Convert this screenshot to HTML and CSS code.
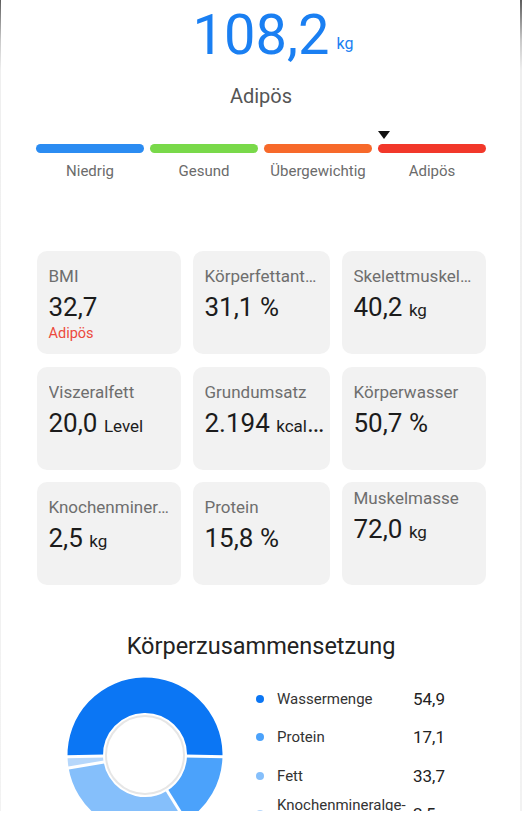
FILE: index.html
```html
<!DOCTYPE html>
<html lang="de">
<head>
    <meta charset="UTF-8">
    <meta name="viewport" content="width=device-width, initial-scale=1.0">
    <title>Gewicht</title>
    <link rel="stylesheet" href="styles.css">
</head>
<body>
    <div class="screen">
        <section class="weight">
            <div class="weight-value">
                <span class="weight-number">108,2</span>
                <span class="weight-unit">kg</span>
            </div>
            <div class="weight-status">Adipös</div>
            <div class="scale">
                <div class="scale-seg">
                    <div class="scale-mark"></div>
                    <div class="scale-bar bar-low"></div>
                    <div class="scale-label">Niedrig</div>
                </div>
                <div class="scale-seg">
                    <div class="scale-mark"></div>
                    <div class="scale-bar bar-ok"></div>
                    <div class="scale-label">Gesund</div>
                </div>
                <div class="scale-seg">
                    <div class="scale-mark"></div>
                    <div class="scale-bar bar-over"></div>
                    <div class="scale-label">Übergewichtig</div>
                </div>
                <div class="scale-seg">
                    <div class="scale-mark active"></div>
                    <div class="scale-bar bar-obese"></div>
                    <div class="scale-label">Adipös</div>
                </div>
            </div>
        </section>

        <section class="metrics">
            <div class="card">
                <div class="card-label">BMI</div>
                <div class="card-value">32,7</div>
                <div class="card-note">Adipös</div>
            </div>
            <div class="card">
                <div class="card-label">Körperfettanteil</div>
                <div class="card-value">31,1 %</div>
            </div>
            <div class="card">
                <div class="card-label">Skelettmuskelmasse</div>
                <div class="card-value">40,2 <span class="card-unit">kg</span></div>
            </div>
            <div class="card">
                <div class="card-label">Viszeralfett</div>
                <div class="card-value">20,0 <span class="card-unit">Level</span></div>
            </div>
            <div class="card">
                <div class="card-label">Grundumsatz</div>
                <div class="card-value">2.194 <span class="card-unit">kcal/Tag</span></div>
            </div>
            <div class="card">
                <div class="card-label">Körperwasser</div>
                <div class="card-value">50,7 %</div>
            </div>
            <div class="card">
                <div class="card-label">Knochenmineralgehalt</div>
                <div class="card-value">2,5 <span class="card-unit">kg</span></div>
            </div>
            <div class="card">
                <div class="card-label">Protein</div>
                <div class="card-value">15,8 %</div>
            </div>
            <div class="card card-high">
                <div class="card-label">Muskelmasse</div>
                <div class="card-value">72,0 <span class="card-unit">kg</span></div>
            </div>
        </section>

        <section class="composition">
            <h2>Körperzusammensetzung</h2>
            <div class="chart-row">
                <svg class="donut" width="160" height="160" viewBox="0 0 160 160">
                    <circle cx="80" cy="80" r="59.75" fill="none" stroke="#0b76f4" stroke-width="35.5"
                        stroke-dasharray="190.49 375.42" transform="rotate(178.65 80 80)"/>
                    <circle cx="80" cy="80" r="59.75" fill="none" stroke="#4ba2fb" stroke-width="35.5"
                        stroke-dasharray="59.33 375.42" transform="rotate(1.35 80 80)"/>
                    <circle cx="80" cy="80" r="59.75" fill="none" stroke="#85bffb" stroke-width="35.5"
                        stroke-dasharray="116.93 375.42" transform="rotate(58.24 80 80)"/>
                    <circle cx="80" cy="80" r="59.75" fill="none" stroke="#b6d7fb" stroke-width="35.5"
                        stroke-dasharray="8.68 375.42" transform="rotate(170.35 80 80)"/>
                    <!-- gaps between segments -->
                    <g stroke="#fff" stroke-width="3">
                        <line x1="40.01" y1="80.94" x2="1.02" y2="81.86"/>
                        <line x1="119.99" y1="80.94" x2="158.98" y2="81.86"/>
                        <line x1="101.06" y1="114.01" x2="121.59" y2="147.17"/>
                        <line x1="40.57" y1="86.71" x2="2.12" y2="93.24"/>
                    </g>
                    <circle cx="80" cy="80" r="39" fill="#fff" stroke="#e6e6e6" stroke-width="2"/>
                </svg>
                <div class="legend">
                    <div class="legend-row">
                        <span class="legend-dot dot-water"></span>
                        <span class="legend-name">Wassermenge</span>
                        <span class="legend-value">54,9</span>
                    </div>
                    <div class="legend-row">
                        <span class="legend-dot dot-protein"></span>
                        <span class="legend-name">Protein</span>
                        <span class="legend-value">17,1</span>
                    </div>
                    <div class="legend-row">
                        <span class="legend-dot dot-fat"></span>
                        <span class="legend-name">Fett</span>
                        <span class="legend-value">33,7</span>
                    </div>
                    <div class="legend-row">
                        <span class="legend-dot dot-bone"></span>
                        <span class="legend-name">Knochenmineralge-<br>halt</span>
                        <span class="legend-value">2,5</span>
                    </div>
                </div>
            </div>
        </section>
    </div>
</body>
</html>
```

FILE: styles.css
```css
body {
    margin: 0;
    padding: 0;
    background: #fff;
    font-family: Roboto, 'Noto Sans', sans-serif;
    color: #1c1c1c;
}
.screen {
    height: 811px;
    overflow: hidden;
    background:
        linear-gradient(to bottom, #5c5c5c, #c8c8c8 40px, #efefef 70px, #f2f2f2) left top / 1px 100% no-repeat,
        linear-gradient(to bottom, #5c5c5c, #c8c8c8 40px, #efefef 70px, #f2f2f2) right top / 2px 100% no-repeat,
        #fff;
}

/* weight header */
.weight {
    padding-top: 2px;
}
.weight-value {
    display: grid;
    grid-template-columns: 1fr auto 1fr;
    align-items: end;
    color: #1a7ff2;
}
.weight-number {
    grid-column: 2;
    font-size: 56px;
    line-height: 66px;
}
.weight-unit {
    grid-column: 3;
    justify-self: start;
    margin-left: 7px;
    margin-bottom: 14px;
    font-size: 16px;
    line-height: 20px;
}
.weight-status {
    margin-top: 16px;
    text-align: center;
    font-size: 20px;
    line-height: 24px;
    color: #555;
}
.scale {
    display: flex;
    gap: 6px;
    margin: 23px 36px 0 36px;
}
.scale-seg {
    flex: 1;
    display: flex;
    flex-direction: column;
    align-items: stretch;
}
.scale-mark {
    width: 0;
    height: 0;
    border-top: 8px solid transparent;
    border-left: 6px solid transparent;
    border-right: 6px solid transparent;
    margin-bottom: 5px;
}
.scale-mark.active {
    border-top-color: #111;
}
.scale-bar {
    height: 9px;
    border-radius: 5px;
}
.bar-low { background: #2b8cf2; }
.bar-ok { background: #79d94a; }
.bar-over { background: #f7692a; }
.bar-obese { background: #f2382a; }
.scale-label {
    margin-top: 8px;
    text-align: center;
    font-size: 15px;
    line-height: 20px;
    color: #6b6b6b;
}

/* metric cards */
.metrics {
    display: grid;
    grid-template-columns: 144px 137px 144px;
    grid-auto-rows: 103px;
    column-gap: 12px;
    row-gap: 12.5px;
    justify-content: center;
    margin-top: 70px;
}
.card {
    background: #f2f2f2;
    border-radius: 10px;
    padding: 14px 10px 0 12px;
    overflow: hidden;
}
.card-high {
    padding-top: 5px;
}
.card-label,
.card-value {
    white-space: nowrap;
    overflow: hidden;
    text-overflow: ellipsis;
}
.card-label {
    font-size: 17px;
    line-height: 22px;
    color: #6e6e6e;
}
.card-value {
    margin-top: 4px;
    margin-right: -8px;
    font-size: 26px;
    line-height: 32px;
    color: #1c1c1c;
}
.card-unit {
    font-size: 17px;
}
.card-note {
    margin-top: 2px;
    font-size: 14.5px;
    line-height: 18px;
    color: #ec4a3c;
}

/* composition */
.composition h2 {
    margin: 47px 0 0 0;
    text-align: center;
    font-size: 23.5px;
    line-height: 28px;
    font-weight: normal;
    color: #222;
}
.chart-row {
    display: flex;
    align-items: flex-start;
    margin-top: 15px;
    padding-left: 65px;
}
.donut {
    display: block;
    flex: none;
}
.legend {
    margin-left: 31px;
    margin-top: 5px;
}
.legend-row {
    display: flex;
    align-items: center;
    height: 38.3px;
}
.legend-dot {
    width: 8px;
    height: 8px;
    border-radius: 50%;
    margin-right: 13px;
    flex: none;
}
.dot-water { background: #0b76f4; }
.dot-protein { background: #4ba2fb; }
.dot-fat { background: #85bffb; }
.dot-bone { background: #b6d7fb; }
.legend-name {
    width: 136px;
    font-size: 15px;
    line-height: 18px;
    color: #333;
}
.legend-value {
    font-size: 17px;
    color: #222;
}
```
